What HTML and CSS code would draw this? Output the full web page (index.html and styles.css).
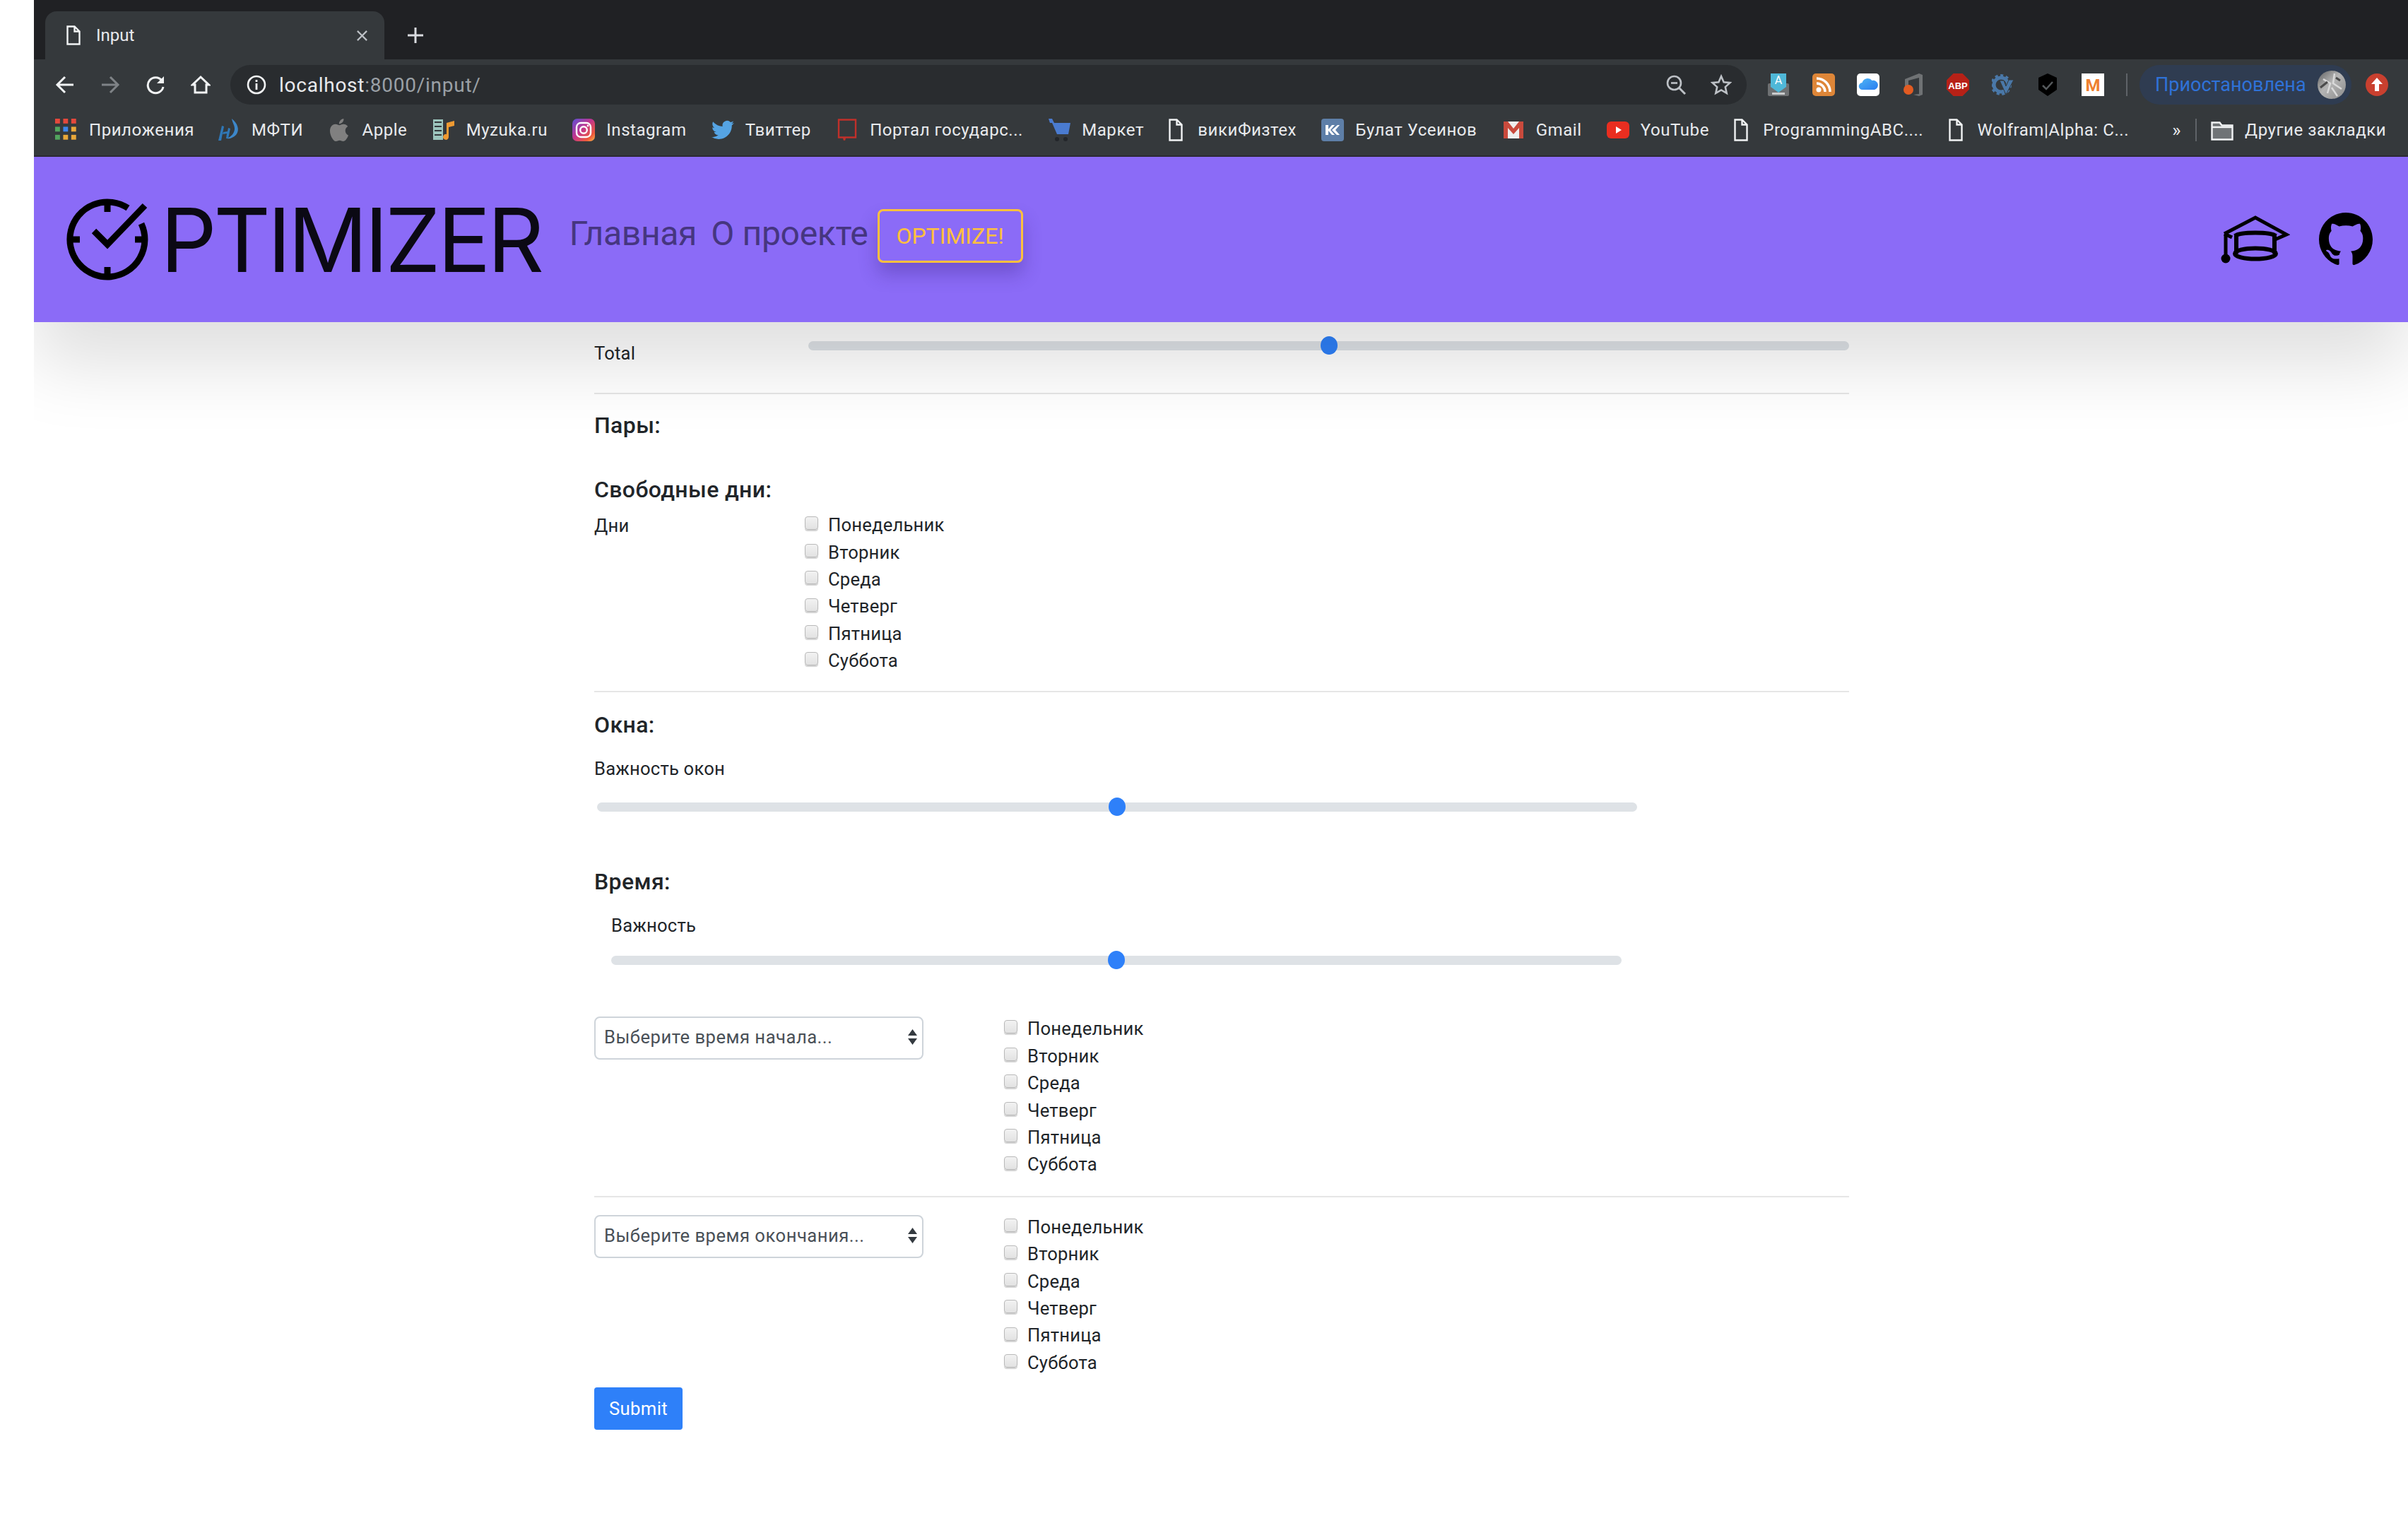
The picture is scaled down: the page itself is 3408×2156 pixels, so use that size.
FILE: index.html
```html
<!DOCTYPE html>
<html lang="ru">
<head>
    <meta charset="UTF-8">
    <title>Input</title>
    <link rel="stylesheet" href="styles.css">
</head>
<body>
<div class="window">
    <div class="chrome">
        <div class="tabstrip">
            <div class="tab">
                <svg class="tab-doc" viewBox="0 0 20 28"><path d="M1.500 1.500h10l7 7v18h-17zM11.500 1.500v7h7" fill="none" stroke="#f1f3f4" stroke-width="2.400"/></svg>
                <span class="tab-title">Input</span>
                <svg class="tab-close" viewBox="0 0 18 18"><path d="M2 2l14 14M16 2L2 16" stroke="#bdc1c6" stroke-width="2.400"/></svg>
            </div>
            <svg class="tab-new" viewBox="0 0 24 24"><path d="M12 1v22M1 12h22" stroke="#dadce0" stroke-width="3"/></svg>
        </div>
        <div class="toolbar">
            <svg class="nav-btn" viewBox="0 0 28 28"><path d="M26 14H4M14 3L3 14l11 11" fill="none" stroke="#f1f3f4" stroke-width="3"/></svg>
            <svg class="nav-btn" viewBox="0 0 28 28"><path d="M2 14h22M14 3l11 11-11 11" fill="none" stroke="#7f8387" stroke-width="3"/></svg>
            <svg class="nav-btn" viewBox="0 0 28 28"><path d="M23 8a11 11 0 1 0 2 9" fill="none" stroke="#f1f3f4" stroke-width="3"/><path d="M26 2v10H16z" fill="#f1f3f4"/></svg>
            <svg class="nav-btn" viewBox="0 0 28 28"><path d="M14 3L2.500 14H6v11h16V14h3.500z" fill="none" stroke="#f1f3f4" stroke-width="3"/></svg>
            <div class="omnibox">
                <svg class="info" viewBox="0 0 28 28"><circle cx="14" cy="14" r="12" fill="none" stroke="#f1f3f4" stroke-width="2.600"/><path d="M14 12v9M14 7v3" stroke="#f1f3f4" stroke-width="2.800"/></svg>
                <span class="url">localhost<span class="url-rest">:8000/input/</span></span>
                <svg class="zoom-icon" viewBox="0 0 28 28"><circle cx="11.500" cy="11.500" r="9.500" fill="none" stroke="#bdc1c6" stroke-width="2.600"/><path d="M18 18l9 9" stroke="#bdc1c6" stroke-width="3"/><path d="M7 11.500h9" stroke="#bdc1c6" stroke-width="2.600"/></svg>
                <svg class="star" viewBox="0 0 30 30"><path d="M15 3l3.600 8.200 8.900.900-6.700 6 1.900 8.800-7.700-4.500-7.700 4.500 1.900-8.800-6.700-6 8.900-.900z" fill="none" stroke="#bdc1c6" stroke-width="2.600"/></svg>
            </div>
            <div class="extensions">
                <svg class="ext" viewBox="0 0 32 32"><rect x="1" y="14" width="30" height="18" rx="2" fill="#6e7173"/><path d="M5 0h22v19l-11 8-11-8z" fill="#4fb8d8"/><text x="16" y="15" class="ext-a">A</text><rect x="7" y="27" width="18" height="3" fill="#c9cbcc"/></svg>
                <svg class="ext" viewBox="0 0 32 32"><rect width="32" height="32" rx="5" fill="#de8638"/><circle cx="9" cy="23" r="3.500" fill="#fff"/><path d="M6 14a12 12 0 0 1 12 12M6 7a19 19 0 0 1 19 19" fill="none" stroke="#fff" stroke-width="3.500"/></svg>
                <svg class="ext" viewBox="0 0 32 32"><defs><linearGradient id="cloud" x1="0" x2="1" y1="0" y2="1"><stop offset="0" stop-color="#4db5f5"/><stop offset="1" stop-color="#2a7df0"/></linearGradient></defs><rect width="32" height="32" rx="5" fill="#fff"/><path d="M8 23a5 5 0 0 1-.500-10 8 8 0 0 1 14-3 6 6 0 0 1 3.500 12.900 6 6 0 0 1-1 .100z" fill="url(#cloud)"/></svg>
                <svg class="ext" viewBox="0 0 32 32"><path d="M4 8L24 0l5 2v28l-5 2-8-2 8-1V6L9 10v12H4z" fill="#6f7274"/><circle cx="9" cy="23" r="7" fill="#e25b22"/></svg>
                <svg class="ext" viewBox="0 0 32 32"><path d="M9.500 0h13L32 9.500v13L22.500 32h-13L0 22.500v-13z" fill="#b72117"/><text x="16" y="22" class="ext-abp">ABP</text></svg>
                <svg class="ext" viewBox="0 0 32 32"><circle cx="13" cy="16" r="10" fill="none" stroke="#4a78a8" stroke-width="5"/><circle cx="13" cy="16" r="13" fill="none" stroke="#4a78a8" stroke-width="4" stroke-dasharray="4 3.500"/><path d="M11 10l9 20 11-21h-7l-4 9-3-8z" fill="#4a78a8" stroke="#35393c" stroke-width="1"/></svg>
                <svg class="ext" viewBox="0 0 32 32"><path d="M16 0l13 6v17l-13 9-13-9V6z" fill="#000"/><path d="M9 17l5 5 9-10" fill="none" stroke="#55595c" stroke-width="2.500"/></svg>
                <svg class="ext" viewBox="0 0 32 32"><rect width="32" height="32" fill="#fff"/><text x="16" y="25" class="ext-m">M</text></svg>
                <div class="ext-sep"></div>
                <div class="profile">
                    <span class="profile-text">Приостановлена</span>
                    <svg class="avatar" viewBox="0 0 40 40"><defs><linearGradient id="ava" x1="0" x2="1" y1="0" y2="1"><stop offset="0" stop-color="#5f5f5f"/><stop offset=".45" stop-color="#b5b5b5"/><stop offset="1" stop-color="#8a8a8a"/></linearGradient></defs><circle cx="20" cy="20" r="20" fill="url(#ava)"/><path d="M8 12l10 6-4 14M24 4l-2 14 12 8M20 24l8 12" fill="none" stroke="#d9d9d9" stroke-width="2.500"/><path d="M4 24l10-8M26 10l6 4" stroke="#4b4b4b" stroke-width="3"/></svg>
                </div>
                <svg class="update" viewBox="0 0 32 32"><circle cx="16" cy="16" r="16" fill="#c9402f"/><path d="M16 6l8 9h-5v10h-6V15H8z" fill="#fff"/></svg>
            </div>
        </div>
        <div class="bookmarks">
            <a class="mark mark-apps"><svg class="mark-icon" viewBox="0 0 28 28"><rect width="6" height="6" fill="#e4483c"/><rect x="10" width="6" height="6" fill="#e4483c"/><rect x="20" width="6" height="6" fill="#e4483c"/><rect y="10" width="6" height="6" fill="#52a55e"/><rect x="10" y="10" width="6" height="6" fill="#3d86ec"/><rect x="20" y="10" width="6" height="6" fill="#e9a83a"/><rect y="20" width="6" height="6" fill="#52a55e"/><rect x="10" y="20" width="6" height="6" fill="#e9a83a"/><rect x="20" y="20" width="6" height="6" fill="#e9a83a"/></svg>Приложения</a>
            <a class="mark"><svg class="mark-icon" viewBox="0 0 32 32"><path d="M20 0c8 6 12 16 6 23-4 4-9 6-13 5 7-3 11-8 11-14 0-5-3-8-4-14z" fill="#3d87c9"/><path d="M6 10l3 1-4 20H1zM15 13l3 1-3 14h-3l1-7-6 1 1-3 6-1z" fill="#2f78b8"/></svg>МФТИ</a>
            <a class="mark"><svg class="mark-icon" viewBox="0 0 24 24"><path d="M12.152 6.896c-.948 0-2.415-1.078-3.960-1.040-2.040.027-3.910 1.183-4.961 3.014-2.117 3.675-.546 9.103 1.519 12.090 1.013 1.454 2.208 3.090 3.792 3.039 1.520-.065 2.090-.987 3.935-.987 1.831 0 2.350.987 3.960.948 1.637-.026 2.676-1.480 3.676-2.948 1.156-1.688 1.636-3.325 1.662-3.415-.039-.013-3.182-1.221-3.220-4.857-.026-3.040 2.480-4.494 2.597-4.559-1.429-2.090-3.623-2.324-4.390-2.376-2-.156-3.675 1.090-4.610 1.090zM15.530 3.830c.843-1.012 1.400-2.427 1.245-3.830-1.207.052-2.662.805-3.532 1.818-.780.896-1.454 2.338-1.273 3.714 1.338.104 2.715-.688 3.559-1.701" fill="#808080"/></svg>Apple</a>
            <a class="mark"><svg class="mark-icon" viewBox="0 0 32 32"><rect x="1" y="1" width="14" height="29" fill="#9cc5bd"/><path d="M3 5h10M3 11h10M3 17h10M3 23h10" stroke="#35393c" stroke-width="2"/><path d="M20 6l11-3v7l-8 2v14a4 4 0 1 1-3-4z" fill="#ee9a32"/></svg>Myzuka.ru</a>
            <a class="mark"><svg class="mark-icon" viewBox="0 0 32 32"><defs><linearGradient id="insta" x1="0" x2="1" y1="0" y2="1"><stop offset="0" stop-color="#5b51d8"/><stop offset=".45" stop-color="#c1358f"/><stop offset=".8" stop-color="#ee5a3a"/><stop offset="1" stop-color="#fcc04f"/></linearGradient></defs><rect width="32" height="32" rx="7" fill="url(#insta)"/><rect x="6" y="6" width="20" height="20" rx="6" fill="none" stroke="#fff" stroke-width="2.400"/><circle cx="16" cy="16" r="4.800" fill="none" stroke="#fff" stroke-width="2.400"/><circle cx="22" cy="10" r="1.400" fill="#fff"/></svg>Instagram</a>
            <a class="mark"><svg class="mark-icon" viewBox="0 0 24 24"><path d="M23.953 4.570a10 10 0 01-2.825.775 4.958 4.958 0 002.163-2.723c-.951.555-2.005.959-3.127 1.184a4.920 4.920 0 00-8.384 4.482C7.690 8.095 4.067 6.130 1.640 3.162a4.822 4.822 0 00-.666 2.475c0 1.710.870 3.213 2.188 4.096a4.904 4.904 0 01-2.228-.616v.060a4.923 4.923 0 003.946 4.827 4.996 4.996 0 01-2.212.085 4.936 4.936 0 004.604 3.417 9.867 9.867 0 01-6.102 2.105c-.390 0-.779-.023-1.170-.067a13.995 13.995 0 007.557 2.209c9.053 0 13.998-7.496 13.998-13.985 0-.210 0-.420-.015-.630A9.935 9.935 0 0024 4.590z" fill="#55a4e4"/></svg>Твиттер</a>
            <a class="mark"><svg class="mark-icon" viewBox="0 0 32 32"><path d="M4 1.500h24v25H13l-1 4-1-4H4z" fill="none" stroke="#c0302a" stroke-width="2.400"/></svg>Портал государс...</a>
            <a class="mark"><svg class="mark-icon" viewBox="0 0 32 32"><path d="M1 0h5l3 6h23l-3 16H13L6 6H3z" fill="#4a7bd0"/><circle cx="13" cy="29" r="3" fill="#23262a"/><circle cx="25" cy="29" r="3" fill="#23262a"/></svg>Маркет</a>
            <a class="mark mark-doc"><svg class="mark-icon" viewBox="0 0 20 32"><path d="M1.500 1.500h10l7 7v22h-17zM11.500 1.500v7h7" fill="none" stroke="#f1f3f4" stroke-width="2.400"/></svg>викиФизтех</a>
            <a class="mark"><svg class="mark-icon" viewBox="0 0 32 32"><rect width="32" height="32" rx="4" fill="#5e7fa8"/><path d="M6 9h4v6l5-6h4l-6 7 6 7h-4l-5-6v6H6z M15 16l8-7h3l-6 7 6 7h-4z" fill="#fff"/></svg>Булат Усеинов</a>
            <a class="mark"><svg class="mark-icon" viewBox="0 0 32 32"><rect x="2" y="4" width="28" height="24" fill="#ededed"/><path d="M2 4h6l8 10 8-10h6v24h-6V13l-8 9-8-9v15H2z" fill="#c94a3d"/></svg>Gmail</a>
            <a class="mark"><svg class="mark-icon" viewBox="0 0 32 32"><rect y="4" width="32" height="24" rx="6" fill="#e92e20"/><path d="M13 11l8 5-8 5z" fill="#fff"/></svg>YouTube</a>
            <a class="mark mark-doc"><svg class="mark-icon" viewBox="0 0 20 32"><path d="M1.500 1.500h10l7 7v22h-17zM11.500 1.500v7h7" fill="none" stroke="#f1f3f4" stroke-width="2.400"/></svg>ProgrammingABC....</a>
            <a class="mark mark-doc"><svg class="mark-icon" viewBox="0 0 20 32"><path d="M1.500 1.500h10l7 7v22h-17zM11.500 1.500v7h7" fill="none" stroke="#f1f3f4" stroke-width="2.400"/></svg>Wolfram|Alpha: C...</a>
            <span class="more">»</span>
            <div class="mark-sep"></div>
            <a class="mark mark-folder"><svg class="mark-icon" viewBox="0 0 32 32"><path d="M1.500 5.500h11l3 4h15v20h-29z" fill="#6f7376" stroke="#f1f3f4" stroke-width="2.400"/><path d="M1.500 12h29" stroke="#f1f3f4" stroke-width="2.400"/></svg>Другие закладки</a>
        </div>
    </div>

    <header class="site-header">
        <a class="brand">
            <svg class="brand-icon" viewBox="0 0 116 116">
                <path d="M87 13.600A53 53 0 1 0 106 35.600" fill="none" stroke="#000" stroke-width="9"/>
                <path d="M58 6v13M58 97v13M6 58h13M97 58h13" stroke="#000" stroke-width="9"/>
                <path d="M39 46l19 19 53-55" fill="none" stroke="#000" stroke-width="9"/>
            </svg>
            <span class="brand-name">PTIMIZER</span>
        </a>
        <nav class="site-nav">
            <a class="nav-link">Главная</a>
            <a class="nav-link">О проекте</a>
            <button class="optimize">OPTIMIZE!</button>
        </nav>
        <div class="header-icons">
            <svg class="cap-icon" viewBox="0 0 98 68">
                <path d="M5 26L49 3l44 24-16 7M5 26l11 5" fill="none" stroke="#000" stroke-width="5"/>
                <path d="M7 27v34" stroke="#000" stroke-width="5"/>
                <circle cx="7" cy="61" r="6.500" fill="#000"/>
                <path d="M20 29c8-6 50-6 58 0M22 28v26M76 28v26" fill="none" stroke="#000" stroke-width="6"/>
                <ellipse cx="49" cy="54" rx="29" ry="7.500" fill="none" stroke="#000" stroke-width="6"/>
            </svg>
            <svg class="github-icon" viewBox="0 0 16 16"><path d="M8 0C3.580 0 0 3.580 0 8c0 3.540 2.290 6.530 5.470 7.590.4.070.550-.170.550-.380 0-.190-.010-.820-.010-1.490-2.010.370-2.530-.490-2.690-.940-.090-.230-.480-.940-.820-1.130-.280-.150-.680-.520-.010-.530.630-.010 1.080.580 1.230.820.720 1.210 1.870.870 2.330.660.070-.520.280-.870.510-1.070-1.780-.2-3.640-.890-3.640-3.950 0-.870.310-1.590.820-2.150-.080-.2-.360-1.020.080-2.120 0 0 .670-.210 2.200.820.640-.180 1.320-.270 2-.270.680 0 1.360.090 2 .270 1.530-1.040 2.200-.820 2.200-.820.440 1.100.160 1.920.080 2.120.510.560.820 1.270.820 2.150 0 3.070-1.870 3.750-3.650 3.950.290.250.540.730.540 1.480 0 1.070-.010 1.930-.010 2.200 0 .210.150.460.550.380A8.013 8.013 0 0016 8c0-4.420-3.580-8-8-8z"/></svg>
        </div>
    </header>

    <main class="content">
        <form class="input-form">
            <div class="total-row">
                <label class="total-label">Total</label>
                <input type="range" class="range total-range">
            </div>
            <hr class="rule rule-total">
            <h5 class="group-title title-pairs">Пары:</h5>
            <h5 class="group-title title-free">Свободные дни:</h5>
            <div class="days-row">
                <label class="days-label">Дни</label>
                <div class="days">
                    <label class="day"><input type="checkbox" class="day-check">Понедельник</label>
                    <label class="day"><input type="checkbox" class="day-check">Вторник</label>
                    <label class="day"><input type="checkbox" class="day-check">Среда</label>
                    <label class="day"><input type="checkbox" class="day-check">Четверг</label>
                    <label class="day"><input type="checkbox" class="day-check">Пятница</label>
                    <label class="day"><input type="checkbox" class="day-check">Суббота</label>
                </div>
            </div>
            <hr class="rule rule-days">
            <h5 class="group-title title-gaps">Окна:</h5>
            <label class="slider-label label-gaps">Важность окон</label>
            <input type="range" class="range gaps-range">
            <h5 class="group-title title-time">Время:</h5>
            <label class="slider-label label-time">Важность</label>
            <input type="range" class="range time-range">
            <div class="time-row time-start">
                <div class="select-wrap">
                    <select class="time-select"><option>Выберите время начала...</option></select>
                    <svg class="select-arrows" viewBox="0 0 13 22"><path d="M6.500 0L13 9H0zM6.500 22L0 13h13z" fill="#343a40"/></svg>
                </div>
                <div class="days">
                    <label class="day"><input type="checkbox" class="day-check">Понедельник</label>
                    <label class="day"><input type="checkbox" class="day-check">Вторник</label>
                    <label class="day"><input type="checkbox" class="day-check">Среда</label>
                    <label class="day"><input type="checkbox" class="day-check">Четверг</label>
                    <label class="day"><input type="checkbox" class="day-check">Пятница</label>
                    <label class="day"><input type="checkbox" class="day-check">Суббота</label>
                </div>
            </div>
            <hr class="rule rule-time">
            <div class="time-row time-end">
                <div class="select-wrap">
                    <select class="time-select"><option>Выберите время окончания...</option></select>
                    <svg class="select-arrows" viewBox="0 0 13 22"><path d="M6.500 0L13 9H0zM6.500 22L0 13h13z" fill="#343a40"/></svg>
                </div>
                <div class="days">
                    <label class="day"><input type="checkbox" class="day-check">Понедельник</label>
                    <label class="day"><input type="checkbox" class="day-check">Вторник</label>
                    <label class="day"><input type="checkbox" class="day-check">Среда</label>
                    <label class="day"><input type="checkbox" class="day-check">Четверг</label>
                    <label class="day"><input type="checkbox" class="day-check">Пятница</label>
                    <label class="day"><input type="checkbox" class="day-check">Суббота</label>
                </div>
            </div>
            <button type="submit" class="submit">Submit</button>
        </form>
    </main>
</div>
</body>
</html>
```
FILE: styles.css
```css
*{
  box-sizing: border-box;
}
html, body{
  margin: 0;
  padding: 0;
  background: #fff;
}
body{
  font-family: Roboto, sans-serif;
  color: #212529;
}
.window{
  margin-left: 48px;
  min-height: 2156px;
  overflow: hidden;
}

/* browser chrome */
.chrome{
  position: relative;
  z-index: 2;
  background: #35393c;
  color: #e8eaed;
  border-bottom: 2px solid #2b2a33;
  height: 222px;
}
.tabstrip{
  height: 84px;
  background: #202124;
  display: flex;
  align-items: flex-end;
  padding-left: 16px;
}
.tab{
  width: 480px;
  height: 68px;
  background: #35393c;
  border-radius: 16px 16px 0 0;
  display: flex;
  align-items: center;
  padding-left: 30px;
}
.tab-doc{
  width: 20px;
  height: 28px;
}
.tab-title{
  font-size: 24px;
  margin-left: 22px;
  flex: 1;
}
.tab-close{
  width: 17px;
  height: 17px;
  margin-right: 23px;
}
.tab-new{
  width: 24px;
  height: 24px;
  margin: 0 0 22px 32px;
}
.toolbar{
  height: 68px;
  display: flex;
  align-items: center;
  padding: 4px 0 0 30px;
}
.nav-btn{
  width: 28px;
  height: 28px;
  margin-right: 36px;
}
.omnibox{
  width: 2146px;
  height: 56px;
  margin-left: -8px;
  border-radius: 28px;
  background: #292c2f;
  display: flex;
  align-items: center;
  padding-left: 23px;
}
.info{
  width: 28px;
  height: 28px;
}
.url{
  font-size: 28px;
  letter-spacing: .75px;
  margin-left: 18px;
  flex: 1;
}
.url-rest{
  color: #9aa0a6;
}
.zoom-icon{
  width: 28px;
  height: 28px;
  margin-right: 35px;
}
.star{
  width: 30px;
  height: 30px;
  margin-right: 21px;
}
.extensions{
  display: flex;
  align-items: center;
  margin-left: 29px;
}
.ext{
  width: 32px;
  height: 32px;
  margin-right: 31.500px;
}
.ext-a{
  font: 16px Roboto, sans-serif;
  fill: #fff;
  text-anchor: middle;
}
.ext-abp{
  font: bold 13px "Liberation Sans", sans-serif;
  fill: #fff;
  text-anchor: middle;
}
.ext-m{
  font: bold 24px Roboto, sans-serif;
  fill: #ee7f30;
  text-anchor: middle;
}
.ext-sep{
  width: 2px;
  height: 32px;
  background: #5f6368;
  margin-right: 17px;
}
.profile{
  width: 300px;
  height: 56px;
  border-radius: 28px;
  background: #2f3c51;
  display: flex;
  align-items: center;
  padding-left: 22px;
}
.profile-text{
  color: #2f72d8;
  font-size: 27px;
  flex: 1;
}
.avatar{
  width: 40px;
  height: 40px;
  margin-right: 8px;
}
.update{
  width: 32px;
  height: 32px;
  margin-left: 20px;
}
.bookmarks{
  height: 68px;
  display: flex;
  align-items: center;
  padding: 0 0 4px 30px;
  font-size: 24px;
  letter-spacing: .55px;
  white-space: nowrap;
}
.mark{
  display: flex;
  align-items: center;
  margin-right: 35.300px;
  color: #e8eaed;
}
.mark-icon{
  width: 32px;
  height: 32px;
  margin-right: 16px;
}
.mark-apps{
  margin-right: 33px;
}
.mark-doc .mark-icon{
  width: 20px;
  margin-right: 21px;
}
.more{
  font-size: 26px;
  margin: 0 20px 0 26px;
}
.mark-sep{
  width: 2px;
  height: 32px;
  background: #5f6368;
  margin-right: 20px;
}
.mark-folder{
  margin-right: 0;
}

/* site header */
.site-header{
  position: relative;
  z-index: 1;
  height: 234px;
  background: #8b6bf7;
  display: flex;
  align-items: center;
  padding: 0 50px 0 46px;
  box-shadow: 0 60px 100px rgba(0,0,0,.125);
}
.brand{
  display: flex;
  align-items: center;
}
.brand-icon{
  width: 116px;
  height: 116px;
}
.brand-name{
  font-family: Inter, sans-serif;
  font-weight: 400;
  font-size: 125px;
  letter-spacing: -4.500px;
  color: #0b0914;
  margin-left: 17px;
  line-height: 1;
}
.site-nav{
  display: flex;
  align-items: center;
  margin: 0 0 10px 40px;
  flex: 1;
}
.nav-link{
  font-size: 48px;
  letter-spacing: -.3px;
  color: #463680;
  margin: 0 20px 8px 0;
}
.optimize{
  width: 206px;
  height: 76px;
  margin-left: -7px;
  background: transparent;
  border: 3px solid #ffc03d;
  border-radius: 8px;
  color: #ffc03d;
  font-family: Roboto, sans-serif;
  font-size: 32px;
  padding: 0;
  box-shadow: 0 16px 26px rgba(50,30,120,.3);
}
.header-icons{
  display: flex;
  align-items: center;
}
.cap-icon{
  width: 98px;
  height: 68px;
  margin-right: 41px;
}
.github-icon{
  width: 76px;
  height: 76px;
}

/* form */
.content{
  margin-left: 793px;
  width: 1776px;
  font-size: 25.600px;
  line-height: 38.400px;
  letter-spacing: .2px;
}
.total-row, .days-row, .time-row{
  display: flex;
  align-items: flex-start;
}
.total-row{
  margin-top: 20px;
}
.total-label{
  width: 303px;
  padding-top: 5px;
}
.range{
  -webkit-appearance: none;
  appearance: none;
  display: block;
  height: 26px;
  margin: 0;
  background: transparent;
}
.range::-webkit-slider-runnable-track{
  height: 13px;
  border-radius: 7px;
  background: #dee2e6;
}
.range::-webkit-slider-thumb{
  -webkit-appearance: none;
  width: 24px;
  height: 26px;
  margin-top: -6.500px;
  border-radius: 50%;
  background: #2e80f9;
}
.total-range{
  width: 1473px;
}
.gaps-range{
  width: 1472px;
  margin: 22px 0 0 4px;
}
.time-range{
  width: 1430px;
  margin: 17px 0 0 24px;
}
.rule{
  border: 0;
  border-top: 2px solid #e6e6e6;
  margin: 0;
}
.rule-total{
  margin-top: 37px;
}
.group-title{
  font-size: 32px;
  font-weight: 500;
  line-height: 38.400px;
  letter-spacing: .4px;
  margin: 0;
}
.title-pairs{
  margin-top: 25px;
}
.title-free{
  margin-top: 52px;
}
.days-row{
  margin-top: 12px;
}
.days-label{
  width: 298px;
  padding-top: 1px;
}
.day{
  display: flex;
  align-items: center;
}
.day-check{
  -webkit-appearance: none;
  appearance: none;
  width: 19px;
  height: 19px;
  margin: -5px 14px 0 0;
  border: 1px solid #b9b9b9;
  border-radius: 4px;
  background: linear-gradient(#f2f2f2, #e2e2e2);
  box-shadow: 0 2px 1px rgba(0,0,0,.18);
}
.rule-days{
  margin-top: 23px;
}
.title-gaps{
  margin-top: 27px;
}
.slider-label{
  display: block;
}
.label-gaps{
  margin-top: 24px;
}
.title-time{
  margin-top: 74px;
}
.label-time{
  margin: 23px 0 0 24px;
}
.time-start{
  margin-top: 67px;
}
.time-row .days{
  margin-top: -2px;
}
.time-end{
  margin-top: 25px;
}
.select-wrap{
  position: relative;
  width: 466px;
  height: 61px;
  margin-right: 114px;
}
.time-select{
  -webkit-appearance: none;
  appearance: none;
  width: 100%;
  height: 100%;
  padding: 0 12px 3px;
  background: #fff;
  border: 2px solid #ced4da;
  border-radius: 8px;
  color: #495057;
  font-family: Roboto, sans-serif;
  font-size: 25.600px;
  letter-spacing: .5px;
}
.select-arrows{
  position: absolute;
  top: 18px;
  right: 9px;
  width: 13px;
  height: 22px;
}
.rule-time{
  margin-top: 25px;
}
.submit{
  display: block;
  width: 125px;
  height: 60px;
  margin-top: 16px;
  background: #2e80f9;
  border: 0;
  border-radius: 4px;
  color: #fff;
  font-family: Roboto, sans-serif;
  font-size: 25.600px;
  letter-spacing: .4px;
  padding: 0;
}
```
